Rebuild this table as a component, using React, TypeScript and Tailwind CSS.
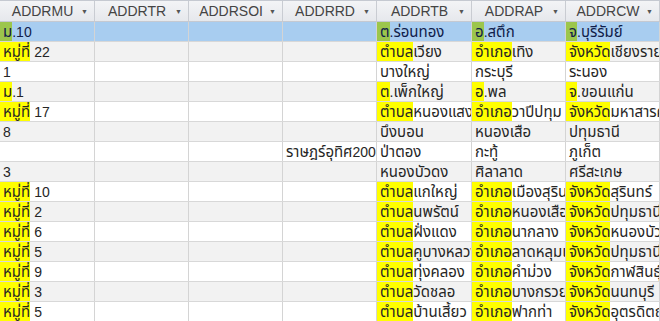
import React from "react";

type Cell = string | [string, string];

const columns = [
  { name: "ADDRMU", w: "w-[95px]" },
  { name: "ADDRTR", w: "w-[94px]" },
  { name: "ADDRSOI", w: "w-[94px]" },
  { name: "ADDRRD", w: "w-[94px]" },
  { name: "ADDRTB", w: "w-[95px]" },
  { name: "ADDRAP", w: "w-[94px]" },
  { name: "ADDRCW", w: "w-[94px]" },
];

const rows: Cell[][] = [
  [["ม", ".10"], "", "", "", ["ต", ".ร่อนทอง"], ["อ", ".สตึก"], ["จ", ".บุรีรัมย์"]],
  [["หมู่ที่", " 22"], "", "", "", ["ตำบล", "เวียง"], ["อำเภอ", "เทิง"], ["จังหวัด", "เชียงราย"]],
  ["1", "", "", "", "บางใหญ่", "กระบุรี", "ระนอง"],
  [["ม", ".1"], "", "", "", ["ต", ".เพ็กใหญ่"], ["อ", ".พล"], ["จ", ".ขอนแก่น"]],
  [["หมู่ที่", " 17"], "", "", "", ["ตำบล", "หนองแสง"], ["อำเภอ", "วาปีปทุม"], ["จังหวัด", "มหาสารคาม"]],
  ["8", "", "", "", "บึงบอน", "หนองเสือ", "ปทุมธานี"],
  ["", "", "", "ราษฎร์อุทิศ200", "ป่าตอง", "กะทู้", "ภูเก็ต"],
  ["3", "", "", "", "หนองบัวดง", "ศิลาลาด", "ศรีสะเกษ"],
  [["หมู่ที่", " 10"], "", "", "", ["ตำบล", "แกใหญ่"], ["อำเภอ", "เมืองสุรินทร์"], ["จังหวัด", "สุรินทร์"]],
  [["หมู่ที่", " 2"], "", "", "", ["ตำบล", "นพรัตน์"], ["อำเภอ", "หนองเสือ"], ["จังหวัด", "ปทุมธานี"]],
  [["หมู่ที่", " 6"], "", "", "", ["ตำบล", "ฝั่งแดง"], ["อำเภอ", "นากลาง"], ["จังหวัด", "หนองบัวลำภู"]],
  [["หมู่ที่", " 5"], "", "", "", ["ตำบล", "คูบางหลวง"], ["อำเภอ", "ลาดหลุมแก้ว"], ["จังหวัด", "ปทุมธานี"]],
  [["หมู่ที่", " 9"], "", "", "", ["ตำบล", "ทุ่งคลอง"], ["อำเภอ", "คำม่วง"], ["จังหวัด", "กาฬสินธุ์"]],
  [["หมู่ที่", " 3"], "", "", "", ["ตำบล", "วัดชลอ"], ["อำเภอ", "บางกรวย"], ["จังหวัด", "นนทบุรี"]],
  [["หมู่ที่", " 5"], "", "", "", ["ตำบล", "บ้านเสี้ยว"], ["อำเภอ", "ฟากท่า"], ["จังหวัด", "อุตรดิตถ์"]],
];

// digits come out smaller than the Thai glyphs in the original grid
const Txt = ({ s }: { s: string }) => (
  <>
    {s.split(/([0-9.]+)/).map((part, k) =>
      /^[0-9.]+$/.test(part) ? (
        <span key={k} className="text-[14px]">
          {part}
        </span>
      ) : (
        <React.Fragment key={k}>{part}</React.Fragment>
      ),
    )}
  </>
);

const App = () => {
  return (
    <div className="w-[660px] h-[321px] overflow-hidden bg-white font-['Tahoma','Liberation_Sans','Noto_Sans_Thai','Noto_Sans',sans-serif]">
      {/* header */}
      <div className="flex h-[22px] border-t border-b border-[#c5c9d1] bg-gradient-to-b from-[#f3f4f6] to-[#e6e8ec] text-[14px]">
        {columns.map((c) => (
          <div
            key={c.name}
            className={`${c.w} shrink-0 flex items-center border-r border-[#c9ccd2] text-[#444] pl-1 pr-[6px]`}
          >
            <span className="grow text-center">{c.name}</span>
            <span className="text-[7px] text-[#555] leading-none">▼</span>
          </div>
        ))}
      </div>

      {/* rows */}
      {rows.map((row, i) => {
        const selected = i === 0;
        const bg = selected ? "bg-[#a8cdf0]" : i % 2 === 1 ? "bg-[#f2f2f2]" : "bg-white";
        return (
          <div key={i} className={`flex h-[20px] border-b border-[#d8d8d8] ${bg}`}>
            {row.map((cell, j) => (
              <div
                key={j}
                className={`${columns[j].w} shrink-0 flex border-r border-[#d4d4d4] whitespace-nowrap overflow-hidden text-[15px] leading-[19px] ${
                  selected ? "text-[#10204a]" : "text-[#262626]"
                }`}
              >
                {typeof cell === "string" ? (
                  <span className="pl-[3px]">
                    <Txt s={cell} />
                  </span>
                ) : (
                  <>
                    <span className={`pl-[3px] ${selected ? "bg-[#9cc64c]" : "bg-[#ffff00]"}`}>
                      {cell[0]}
                    </span>
                    <span className="whitespace-pre">
                      <Txt s={cell[1]} />
                    </span>
                  </>
                )}
              </div>
            ))}
          </div>
        );
      })}
    </div>
  );
};

export default App;
